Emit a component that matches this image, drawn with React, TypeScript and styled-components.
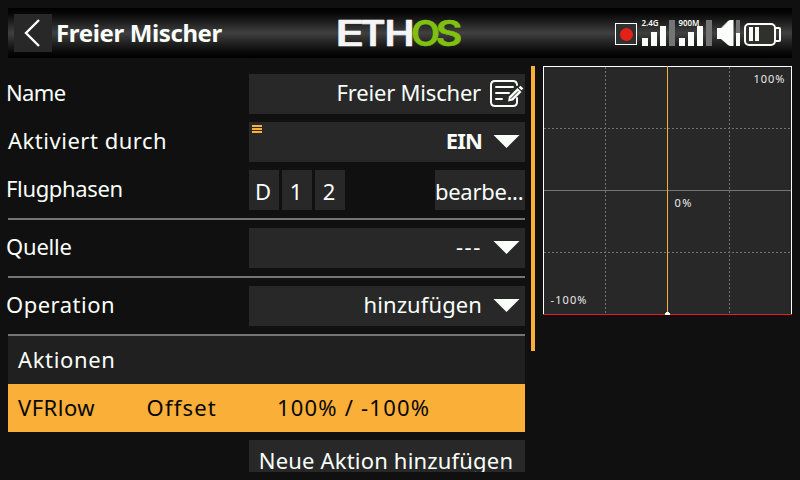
import React from "react";
import styled, { createGlobalStyle } from "styled-components";

const WHITE = "#fafffa";
const AMBER = "#f9af38";
const FIELD = "#282828";

const GlobalStyle = createGlobalStyle`
  * { box-sizing: border-box; }
  body { margin: 0; background: #101010; }
`;

const Screen = styled.div`
  display: flex;
  flex-direction: column;
  width: 800px;
  height: 480px;
  padding: 8px 8px 0;
  overflow: hidden;
  background: #101010;
  color: ${WHITE};
  font-family: "Noto Sans", "Open Sans", sans-serif;
  font-size: 22px;
  line-height: 30px;
  font-variant-ligatures: none;
  white-space: pre;
`;

const Header = styled.header`
  display: grid;
  grid-template-columns: 325px 1fr 177px;
  flex: none;
  height: 50px;
  background: linear-gradient(#000 0%, #060606 10%, #222 30%, #404040 50%, #222 70%, #060606 90%, #000 100%);
`;

const HeaderLeft = styled.div`
  display: flex;
  align-items: center;
  padding-left: 6px;
`;

const BackButton = styled.button`
  display: flex;
  width: 38px;
  height: 38px;
  padding: 0;
  border: 0;
  background: ${FIELD};
`;

const Title = styled.h1`
  margin: 0 0 0 4px;
  font-size: 24px;
  font-weight: 700;
  letter-spacing: -0.37px;
`;

const Body = styled.div`
  display: flex;
  height: 406px;
  margin-top: 8px;
`;

const Form = styled.main`
  display: flex;
  flex-direction: column;
  flex: none;
  width: 521px;
  height: 406px;
  margin-left: -4px;
  padding: 4px 0 0 4px;
  overflow: hidden;
`;

const Row = styled.div<{ $ruled?: boolean }>`
  display: grid;
  grid-template-columns: 241px 276px;
  align-items: center;
  flex: none;
  height: ${(p) => (p.$ruled ? 58 : 48)}px;
  border-bottom: ${(p) => (p.$ruled ? "2px solid #747474" : "0")};
`;

const PhaseRow = styled(Row)`
  align-items: start;
  height: 54px;
  padding-top: 4px;
  border-bottom: 2px solid #747474;
`;

const Txt = styled.span<{ $track?: number }>`
  letter-spacing: ${(p) => p.$track ?? 0}px;
`;

const Label = styled(Txt)<{ $nudge?: number }>`
  height: 40px;
  line-height: 37px;
  margin-left: ${(p) => p.$nudge ?? -2}px;
`;

const Field = styled.div`
  display: grid;
  grid-template-columns: 1fr 43px;
  height: 40px;
  background: ${FIELD};
  line-height: 37px;
`;

const MenuField = styled(Field)`
  grid-template-columns: 13px 1fr 43px;
`;

const Value = styled(Txt)<{ $bold?: boolean; $end?: number }>`
  text-align: right;
  font-weight: ${(p) => (p.$bold ? 700 : 400)};
  margin-right: ${(p) => p.$end ?? 0}px;
`;

const MenuMark = styled.div`
  height: 8px;
  width: 10px;
  margin: 3px 0 0 3px;
  background: repeating-linear-gradient(${AMBER} 0 2px, transparent 2px 3px);
`;

const Phases = styled.div`
  display: flex;
  gap: 3px;
`;

const Phase = styled.button<{ $wide?: boolean }>`
  width: ${(p) => (p.$wide ? 90 : 30)}px;
  height: 40px;
  margin: 0 0 0 ${(p) => (p.$wide ? "auto" : "0")};
  padding: 2px 2px 0 0;
  border: 0;
  background: ${FIELD};
  color: inherit;
  font: inherit;
  line-height: 38px;
  letter-spacing: ${(p) => (p.$wide ? -0.3 : 0)}px;
`;

const ActionsHead = styled.div`
  flex: none;
  height: 48px;
  padding-left: 10px;
  background: #202020;
  line-height: 47px;
`;

const ActionRow = styled.div`
  display: grid;
  grid-template-columns: 128.5px 130.500px 1fr;
  flex: none;
  height: 48px;
  padding-left: 10px;
  background: ${AMBER};
  color: #080808;
  line-height: 47px;
`;

const AddButton = styled.button`
  flex: none;
  align-self: flex-end;
  width: 276px;
  height: 40px;
  margin-top: 8px;
  padding: 0 2px 0 0;
  border: 0;
  background: ${FIELD};
  color: inherit;
  font: inherit;
  line-height: 41px;
  letter-spacing: 0.18px;
`;

const Scrollbar = styled.div`
  flex: none;
  width: 4px;
  height: 285px;
  margin: 0 8px 0 6px;
  background: ${AMBER};
`;

const Arrow = () => (
  <svg width="43" height="40" viewBox="0 0 43 40">
    <path d="M11.5 13h26L24.5 26z" fill={WHITE} />
  </svg>
);

const EditIcon = () => (
  <svg width="43" height="40" viewBox="0 0 43 40" fill="none" stroke={WHITE} strokeWidth="2" strokeLinecap="round">
    <path d="M35 11V10.500Q34.500 7 31 7H13Q9 7 9 11V28Q9 32 13 32H31Q35 32 35 28V24" />
    <path d="M14 13H31M14 19H27M14 25H20" />
    <path d="M26 27.500l1-5L35.500 14l4 4-8.500 8.500z" fill={WHITE} stroke="none" />
    <path d="M29 24.500L36 17.500" stroke={FIELD} strokeWidth="1" />
    <path d="M37.500 13.500l1-1 2 2-1 1z" fill={WHITE} strokeWidth="1.200" />
  </svg>
);

const LogoDrawing = styled.svg`
  overflow: visible;
  font-family: Inter, sans-serif;
  font-size: 34.8px;
`;

const Logo = () => (
  <LogoDrawing width="130" height="50" viewBox="333 8 130 50">
    <g fill="#f4f5f4" stroke="#f4f5f4" strokeWidth=".7" strokeLinejoin="round">
      <text x="335" y="45.700" fontWeight="500" textLength="29.500" lengthAdjust="spacingAndGlyphs">E</text>
      <text x="360.500" y="45.700" fontWeight="600" textLength="25" lengthAdjust="spacingAndGlyphs">T</text>
      <text x="384.500" y="45.700" fontWeight="600" textLength="30" lengthAdjust="spacingAndGlyphs">H</text>
    </g>
    <g fill="#80c010" stroke="#80c010" strokeWidth=".5">
      <text x="411" y="45.700" fontWeight="600" textLength="29" lengthAdjust="spacingAndGlyphs">O</text>
      <text x="435.500" y="45.700" fontWeight="600" textLength="27" lengthAdjust="spacingAndGlyphs">S</text>
    </g>
  </LogoDrawing>
);

const StatusIcons = () => (
  <svg width="177" height="50" viewBox="615 8 177 50" fill={WHITE}>
    <rect x="615.500" y="23.500" width="21" height="21" fill="#30302f" stroke={WHITE} />
    <circle cx="626.500" cy="34.500" r="6.500" fill="#e4201a" />
    <path d="M642 38h6v8h-6zM651 32h6v14h-6zM660 26h6v20h-6z" />
    <path d="M679 38h6v8h-6zM688 32h6v14h-6zM697 26h6v20h-6z" />
    <path d="M669 20h6v26h-6zM706 20h6v26h-6zM736 20h4v13h-4z" fill="#747474" />
    <g fontSize="8" fontWeight="600" fontFamily="Noto Sans, sans-serif">
      <text x="641.500" y="26" textLength="17" lengthAdjust="spacingAndGlyphs">2.4G</text>
      <text x="678.500" y="26" textLength="21" lengthAdjust="spacingAndGlyphs">900M</text>
    </g>
    <path d="M717 28h4l7-7q1-1 3-1h2.500v26H731q-2 0-3-1l-7-6h-4z" />
    <path d="M722 27.500l5-5" stroke="#999" strokeWidth=".7" />
    <rect x="736" y="33" width="4" height="13" />
    <rect x="745" y="24" width="30" height="21" rx="4" fill="#30302f" stroke={WHITE} strokeWidth="2" />
    <path d="M776 28h3q1 0 1 1v11q0 1-1 1h-3" fill="none" stroke={WHITE} strokeWidth="2" />
    <path d="M749 27h4v14h-4zM755 27h4v14h-4z" />
  </svg>
);

const Curve = () => (
  <svg width="249" height="249" viewBox="0 0 249 249" shapeRendering="crispEdges" fill="none">
    <rect width="249" height="249" fill={FIELD} />
    <path d="M1 62.500H248M1 186.500H248M62.500 1V248M186.500 1V248" stroke="#747474" strokeDasharray="2 2" />
    <path d="M1 124.500H248" stroke="#747474" />
    <path d="M.5 248V.5H248.500V248" stroke="#fff" />
    <path d="M124.500 0V248" stroke={AMBER} />
    <path d="M0 248.500H249" stroke="#e4201a" />
    <path d="M122 247h5v2h-5zM123 246h3v1h-3z" fill={WHITE} />
    <g fill="#e8ebe8" fontSize="11" fontFamily="Noto Sans, sans-serif">
      <text x="210.500" y="17" textLength="31">100%</text>
      <text x="131.500" y="141" textLength="17">0%</text>
      <text x="7.500" y="238" textLength="36">-100%</text>
    </g>
  </svg>
);

export default function App() {
  return (
    <Screen>
      <GlobalStyle />
      <Header>
        <HeaderLeft>
          <BackButton aria-label="Zurück">
            <svg width="38" height="38" viewBox="0 0 38 38" fill="none" stroke={WHITE} strokeWidth="2.400">
              <path d="M25 6L12 19L25 32" />
            </svg>
          </BackButton>
          <Title>Freier Mischer</Title>
        </HeaderLeft>
        <Logo />
        <StatusIcons />
      </Header>
      <Body>
        <Form>
          <Row>
            <Label $track={-0.6}>Name</Label>
            <Field>
              <Value $track={-0.2} $end={1}>Freier Mischer</Value>
              <EditIcon />
            </Field>
          </Row>
          <Row>
            <Label $track={0.52} $nudge={0}>Aktiviert durch</Label>
            <MenuField>
              <MenuMark />
              <Value $bold $track={-0.8}>EIN</Value>
              <Arrow />
            </MenuField>
          </Row>
          <PhaseRow>
            <Label $track={-0.35}>Flugphasen</Label>
            <Phases>
              <Phase>D</Phase>
              <Phase>1</Phase>
              <Phase>2</Phase>
              <Phase $wide>bearbe...</Phase>
            </Phases>
          </PhaseRow>
          <Row $ruled>
            <Label $track={-0.2}>Quelle</Label>
            <Field>
              <Value $track={1.6}>---</Value>
              <Arrow />
            </Field>
          </Row>
          <Row $ruled>
            <Label $track={0.5}>Operation</Label>
            <Field>
              <Value $track={0.1}>hinzufügen</Value>
              <Arrow />
            </Field>
          </Row>
          <ActionsHead>
            <Txt $track={0.65}>Aktionen</Txt>
          </ActionsHead>
          <ActionRow>
            <Txt $track={0.5}>VFRlow</Txt>
            <Txt $track={1.2}>Offset</Txt>
            <Txt $track={1.2}>100% / -100%</Txt>
          </ActionRow>
          <AddButton>Neue Aktion hinzufügen</AddButton>
        </Form>
        <Scrollbar />
        <Curve />
      </Body>
    </Screen>
  );
}
